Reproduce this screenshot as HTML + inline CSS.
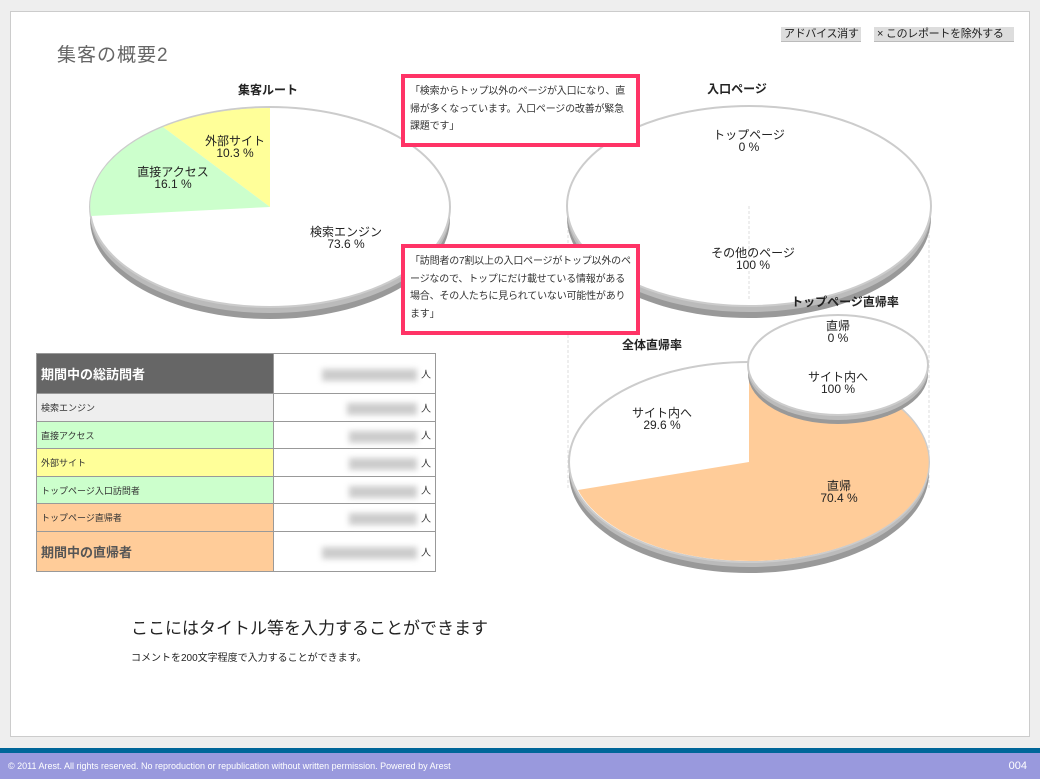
<!DOCTYPE html>
<html><head><meta charset="utf-8"><style>
*{margin:0;padding:0;box-sizing:border-box}
body{width:1040px;height:779px;background:#eee;position:relative;overflow:hidden;font-family:"Liberation Sans","Noto Sans CJK JP",sans-serif;color:#333}
.panel{position:absolute;left:10px;top:11px;width:1020px;height:726px;background:#fff;border:1px solid #ccc}
.abs{position:absolute}
.btn{position:absolute;top:27px;height:15px;background:#ddd;border-bottom:1px solid #bbb;font-size:11px;line-height:15px;padding:0 3px;color:#222;white-space:nowrap;overflow:hidden;letter-spacing:-0.3px}
.call{position:absolute;border:4px solid #ff3366;background:#fff;font-size:10px;line-height:17.5px;padding:5px 5px;color:#333;letter-spacing:-0.2px}
table{position:absolute;left:36px;top:353px;border-collapse:collapse;width:400px}
td{border:1px solid #999;font-size:9px;color:#333;padding:0 4px}
td.v{background:#fff;text-align:right;font-size:10px;padding-right:4px}
.blur{display:inline-block;background:#ccc;filter:blur(3px);height:12px;vertical-align:middle;margin-right:4px}
svg text{font-family:"Liberation Sans","Noto Sans CJK JP",sans-serif;font-size:12px;fill:#222;text-anchor:middle}
.foot1{position:absolute;left:0;top:748px;width:1040px;height:5px;background:#006699}
.foot2{position:absolute;left:0;top:753px;width:1040px;height:26px;background:#9999dd;color:#fff;font-size:9px;line-height:26px;padding-left:8px}
</style></head><body>
<div class="panel"></div>
<div class="abs" style="left:57px;top:40px;font-size:19px;letter-spacing:1px;color:#666">集客の概要2</div>
<div class="btn" style="left:781px;width:80px">アドバイス消す</div>
<div class="btn" style="left:874px;width:140px">× このレポートを除外する</div>

<svg class="abs" style="left:0;top:0" width="1040" height="779">
<line x1="568" y1="210" x2="568" y2="490" stroke="#ddd" stroke-dasharray="3,2"/>
<line x1="929" y1="210" x2="929" y2="490" stroke="#ddd" stroke-dasharray="3,2"/>
<text x="268" y="94" style="font-weight:bold;font-size:12px">集客ルート</text>
<ellipse cx="270" cy="219" rx="180" ry="100" fill="#999"/>
<ellipse cx="270" cy="213" rx="180" ry="100" fill="#bbb"/>
<ellipse cx="270" cy="207" rx="180" ry="100" fill="#fff" stroke="#ccc" stroke-width="2"/>
<path d="M270,207 L270,108 A180,99 0 0,0 163,127 Z" fill="#ffff99"/>
<path d="M270,207 L163,127 A180,99 0 0,0 91,216 Z" fill="#ccffcc"/>
<text x="235" y="145">外部サイト</text><text x="235" y="157">10.3 %</text>
<text x="173" y="176">直接アクセス</text><text x="173" y="188">16.1 %</text>
<text x="346" y="236">検索エンジン</text><text x="346" y="248">73.6 %</text>

<text x="737" y="93" style="font-weight:bold">入口ページ</text>
<ellipse cx="749" cy="218" rx="182" ry="100" fill="#999"/>
<ellipse cx="749" cy="212" rx="182" ry="100" fill="#bbb"/>
<ellipse cx="749" cy="206" rx="182" ry="100" fill="#fff" stroke="#ccc" stroke-width="2"/>
<line x1="749" y1="206" x2="749" y2="300" stroke="#ddd" stroke-dasharray="3,2"/>
<text x="749" y="139">トップページ</text><text x="749" y="151">0 %</text>
<text x="753" y="257">その他のページ</text><text x="753" y="269">100 %</text>

<text x="652" y="349" style="font-weight:bold">全体直帰率</text>
<ellipse cx="749" cy="473" rx="180" ry="100" fill="#999"/>
<ellipse cx="749" cy="467" rx="180" ry="100" fill="#bbb"/>
<ellipse cx="749" cy="462" rx="180" ry="100" fill="#fff" stroke="#ccc" stroke-width="2"/>
<path d="M749,462 L749,363 A179,99 0 1,1 578,490 Z" fill="#ffcc99"/>
<text x="662" y="417">サイト内へ</text><text x="662" y="429">29.6 %</text>
<text x="839" y="490">直帰</text><text x="839" y="502">70.4 %</text>

<text x="845" y="306" style="font-weight:bold">トップページ直帰率</text>
<ellipse cx="838" cy="374" rx="90" ry="50" fill="#999"/>
<ellipse cx="838" cy="370" rx="90" ry="50" fill="#bbb"/>
<ellipse cx="838" cy="365" rx="90" ry="50" fill="#fff" stroke="#ccc" stroke-width="2"/>
<text x="838" y="330">直帰</text><text x="838" y="342">0 %</text>
<text x="838" y="381">サイト内へ</text><text x="838" y="393">100 %</text>
</svg>

<div class="call" style="left:401px;top:74px;width:239px;height:73px">「検索からトップ以外のページが入口になり、直帰が多くなっています。入口ページの改善が緊急課題です」</div>
<div class="call" style="left:401px;top:244px;width:239px;height:91px">「訪問者の7割以上の入口ページがトップ以外のページなので、トップにだけ載せている情報がある場合、その人たちに見られていない可能性があります」</div>

<table>
<tr style="height:40px"><td style="background:#666;color:#fff;font-size:13px;font-weight:bold;width:237px">期間中の総訪問者</td><td class="v"><span class="blur" style="width:95px"></span>人</td></tr>
<tr style="height:28px"><td style="background:#eee">検索エンジン</td><td class="v"><span class="blur" style="width:70px"></span>人</td></tr>
<tr style="height:27px"><td style="background:#ccffcc">直接アクセス</td><td class="v"><span class="blur" style="width:68px"></span>人</td></tr>
<tr style="height:28px"><td style="background:#ffff99">外部サイト</td><td class="v"><span class="blur" style="width:68px"></span>人</td></tr>
<tr style="height:27px"><td style="background:#ccffcc">トップページ入口訪問者</td><td class="v"><span class="blur" style="width:68px"></span>人</td></tr>
<tr style="height:28px"><td style="background:#ffcc99">トップページ直帰者</td><td class="v"><span class="blur" style="width:68px"></span>人</td></tr>
<tr style="height:40px"><td style="background:#ffcc99;color:#555;font-size:13px;font-weight:bold">期間中の直帰者</td><td class="v"><span class="blur" style="width:95px"></span>人</td></tr>
</table>

<div class="abs" style="left:131px;top:614px;font-size:17px;color:#222">ここにはタイトル等を入力することができます</div>
<div class="abs" style="left:131px;top:649px;font-size:10px;color:#222">コメントを200文字程度で入力することができます。</div>

<div class="foot1"></div>
<div class="foot2">© 2011 Arest. All rights reserved. No reproduction or republication without written permission. Powered by Arest<span style="position:absolute;right:13px;font-size:11px">004</span></div>
</body></html>
